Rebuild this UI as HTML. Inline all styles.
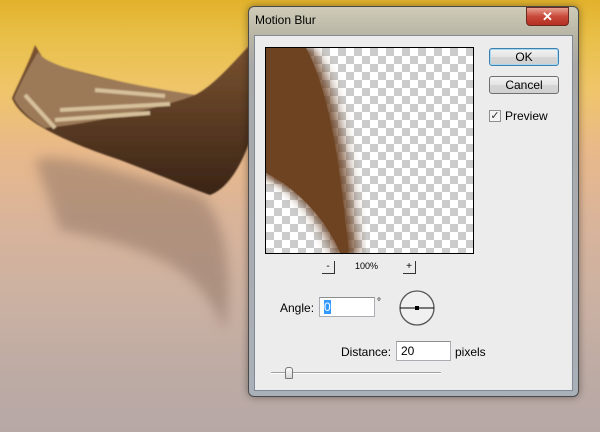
<!DOCTYPE html>
<html><head><style>
*{margin:0;padding:0;box-sizing:border-box}
body{width:600px;height:432px;overflow:hidden;position:relative;font-family:"Liberation Sans",sans-serif;font-size:12px;
background:linear-gradient(180deg,#e2b22c 0px,#e9c04a 40px,#efc56a 90px,#e9b98a 150px,#d9b49a 220px,#cbb1a2 300px,#bcaaa4 380px,#b7a8a6 432px)}
.abs{position:absolute}
.btn{position:absolute;left:489px;width:70px;height:18px;border:1px solid #707070;border-radius:3px;background:linear-gradient(#f2f2f2,#e4e4e4 50%,#d6d6d6 51%,#d0d0d0);text-align:center;font-size:12px;line-height:16px;color:#000}
.chk{background-color:#fff;background-image:linear-gradient(45deg,#ccc 25%,transparent 25%,transparent 75%,#ccc 75%),linear-gradient(45deg,#ccc 25%,transparent 25%,transparent 75%,#ccc 75%);background-size:16px 16px;background-position:0 0,8px 8px}
.inp{position:absolute;background:#fff;border:1px solid #abadb3;border-top-color:#8e8f8f;height:20px;font-size:12px;line-height:18px;padding-left:4px}
</style></head><body>
<svg class="abs" style="left:0;top:0" width="260" height="432">
<defs><filter id="b"><feGaussianBlur stdDeviation="6"/></filter><filter id="b2"><feGaussianBlur stdDeviation="0.7"/></filter>
<linearGradient id="h" x1="0" y1="0" x2="0" y2="1"><stop offset="0" stop-color="#7a5230"/><stop offset="1" stop-color="#3a2416"/></linearGradient></defs>
<path d="M35,160 C60,150 130,175 200,195 C230,220 232,290 225,330 C200,270 160,250 60,230 Z" fill="#8b7060" opacity=".5" filter="url(#b)"/>
<g filter="url(#b2)">
<path d="M35,45 C30,60 20,80 12,98 C20,120 60,140 120,160 C160,175 190,188 210,195 C225,190 240,170 250,140 L250,45 C235,60 215,85 195,95 C150,90 90,75 45,62 Z" fill="url(#h)"/>
<path d="M38,52 C45,66 100,80 195,95 C160,108 100,122 45,128 C28,118 17,106 14,98 C22,80 30,65 38,52 Z" fill="#9c7a58"/>
<path d="M25,95 L55,128 M60,110 L170,104 M95,90 L165,96 M55,120 L150,113" stroke="#d6c09a" stroke-width="4"/>
</g>
</svg>
<div class="abs" style="left:248px;top:6px;width:331px;height:391px;border-radius:6px;border:1px solid #4a4a4a;background:linear-gradient(180deg,#cfcbb8,#b8b4a4 30px,#a8a8a8 60px,#aab0b8);box-shadow:0 0 8px rgba(0,0,0,.4)"></div>
<div class="abs" style="left:255px;top:13px;font-size:12px;color:#000">Motion Blur</div>
<div class="abs" style="left:526px;top:7px;width:43px;height:19px;border:1px solid #6b2a20;border-radius:0 0 4px 4px;background:linear-gradient(#e8a090,#c8493a 50%,#b43020);color:#fff;font-weight:bold;text-align:center;font-size:13px;line-height:17px">✕</div>
<div class="abs" style="left:254px;top:35px;width:319px;height:356px;background:#ececec;border:1px solid #7f8a96"></div>
<div class="abs chk" style="left:265px;top:47px;width:209px;height:207px;border:1px solid #000;overflow:hidden">
<svg width="209" height="207" style="position:absolute;left:0;top:0"><defs><filter id="c"><feGaussianBlur stdDeviation="7 2"/></filter></defs>
<path d="M0,0 L45,0 C70,40 80,110 85,160 C88,185 92,200 90,207 L70,207 C55,170 30,140 0,130 Z" fill="#6a4020" filter="url(#c)"/>
<path d="M0,0 L40,0 C62,40 72,110 78,160 C80,185 84,200 82,207 L75,207 C60,170 30,140 0,125 Z" fill="#6e4322"/></svg></div>
<div class="btn" style="top:48px;border-color:#3c7fb1;box-shadow:0 0 0 1px #a8d8f0 inset">OK</div>
<div class="btn" style="top:76px">Cancel</div>
<div class="abs" style="left:489px;top:110px;width:12px;height:12px;border:1px solid #8f8f8f;background:#f4f4f4;font-size:11px;line-height:10px;text-align:center;color:#333">✓</div>
<div class="abs" style="left:505px;top:109px">Preview</div>
<div class="abs" style="left:322px;top:261px;width:13px;height:13px;border-right:1px solid #333;border-bottom:1px solid #333;text-align:center;font-size:10px;line-height:11px">-</div>
<div class="abs" style="left:355px;top:261px;font-size:9px">100%</div>
<div class="abs" style="left:403px;top:261px;width:13px;height:13px;border-right:1px solid #333;border-bottom:1px solid #333;text-align:center;font-size:10px;line-height:12px">+</div>
<div class="abs" style="left:280px;top:301px">Angle:</div>
<div class="inp" style="left:319px;top:297px;width:56px"><span style="background:#3399ff;color:#fff">0</span></div>
<div class="abs" style="left:377px;top:297px;font-size:10px">°</div>
<svg class="abs" style="left:398px;top:289px" width="40" height="40"><circle cx="19" cy="19" r="17" fill="#f0f0f0" stroke="#555" stroke-width="1.3"/><line x1="2" y1="19" x2="36" y2="19" stroke="#000"/><rect x="17" y="17" width="4" height="4" fill="#000"/></svg>
<div class="abs" style="left:341px;top:345px">Distance:</div>
<div class="inp" style="left:396px;top:341px;width:55px">20</div>
<div class="abs" style="left:455px;top:345px">pixels</div>
<div class="abs" style="left:271px;top:372px;width:170px;height:2px;border-top:1px solid #a0a0a0;border-bottom:1px solid #fff"></div>
<div class="abs" style="left:285px;top:367px;width:8px;height:12px;border:1px solid #777;border-radius:3px 3px 1px 1px;background:linear-gradient(#fafafa,#d8d8d8)"></div>
</body></html>
